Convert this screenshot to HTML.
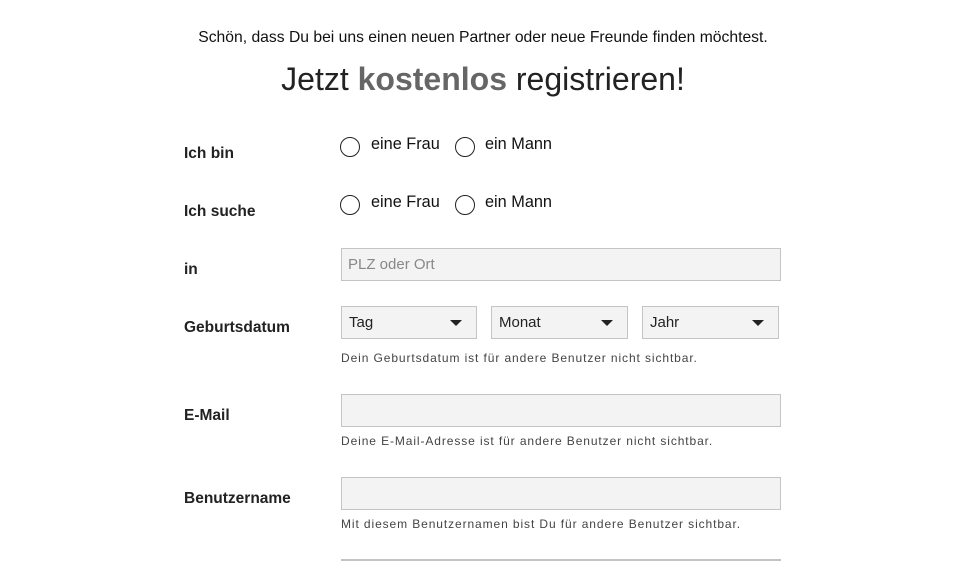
<!DOCTYPE html>
<html><head><meta charset="utf-8"><style>
*{margin:0;padding:0;box-sizing:border-box}
body{width:960px;height:561px;background:#fff;font-family:"Liberation Sans",sans-serif;color:#111;position:relative;overflow:hidden}
.a{position:absolute;white-space:nowrap}
.lbl{font-size:15.5px;font-weight:bold;color:#222;left:184px}
.rad{position:absolute;width:20px;height:20px;border:1px solid #222;border-radius:50%}
.opt{font-size:16.3px;color:#111}
.inp{position:absolute;background:#f3f3f3;border:1px solid #c4c4c4;height:33px}
.sel{position:absolute;background:#f3f3f3;border:1px solid #c4c4c4;height:33px;width:137px;font-size:15px;color:#222;padding:7px 0 0 7px}
.sel:after{content:"";position:absolute;right:14px;top:13px;border-left:6px solid transparent;border-right:6px solid transparent;border-top:6px solid #222}
.hint{font-size:12px;color:#444;left:341px;letter-spacing:0.9px}
</style></head><body>
<div class="a" style="left:0;width:966px;text-align:center;top:29px;font-size:15.7px;color:#111">Schön, dass Du bei uns einen neuen Partner oder neue Freunde finden möchtest.</div>
<div class="a" style="left:0;width:966px;text-align:center;top:61px;font-size:32px;color:#222">Jetzt <b style="color:#666">kostenlos</b> registrieren!</div>

<div class="a lbl" style="top:145px">Ich bin</div>
<div class="rad" style="left:340px;top:137px"></div><div class="a opt" style="left:371px;top:135px">eine Frau</div>
<div class="rad" style="left:455px;top:137px"></div><div class="a opt" style="left:485px;top:135px">ein Mann</div>

<div class="a lbl" style="top:203px">Ich suche</div>
<div class="rad" style="left:340px;top:195px"></div><div class="a opt" style="left:371px;top:193px">eine Frau</div>
<div class="rad" style="left:455px;top:195px"></div><div class="a opt" style="left:485px;top:193px">ein Mann</div>

<div class="a lbl" style="top:261px">in</div>
<div class="inp" style="left:341px;top:248px;width:440px;font-size:15px;color:#888;padding:7px 0 0 6px">PLZ oder Ort</div>

<div class="a lbl" style="top:319px">Geburtsdatum</div>
<div class="sel" style="left:341px;top:306px;width:136px">Tag</div>
<div class="sel" style="left:491px;top:306px">Monat</div>
<div class="sel" style="left:642px;top:306px">Jahr</div>
<div class="a hint" style="top:351px">Dein Geburtsdatum ist für andere Benutzer nicht sichtbar.</div>

<div class="a lbl" style="top:407px">E-Mail</div>
<div class="inp" style="left:341px;top:394px;width:440px"></div>
<div class="a hint" style="top:434px">Deine E-Mail-Adresse ist für andere Benutzer nicht sichtbar.</div>

<div class="a lbl" style="top:490px">Benutzername</div>
<div class="inp" style="left:341px;top:477px;width:440px"></div>
<div class="a hint" style="top:517px">Mit diesem Benutzernamen bist Du für andere Benutzer sichtbar.</div>

<div class="a" style="left:341px;top:559px;width:440px;height:2px;background:#c4c4c4"></div>
</body></html>
